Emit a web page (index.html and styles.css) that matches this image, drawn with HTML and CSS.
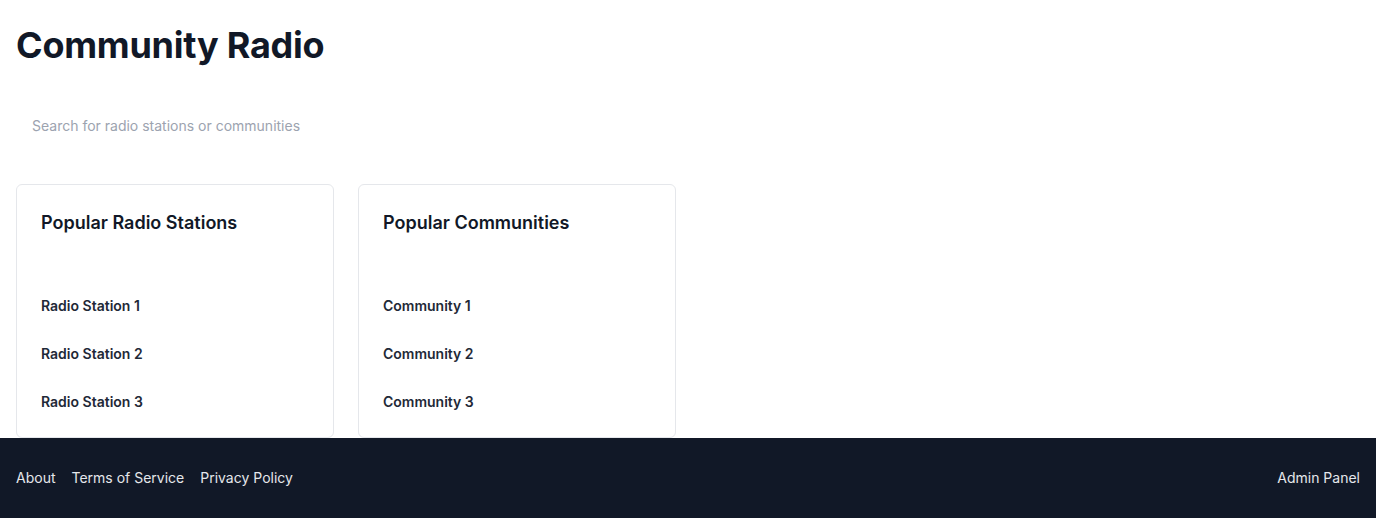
FILE: index.html
```html
<!DOCTYPE html>
<html lang="en">
<head>
<meta charset="utf-8">
<title>Community Radio</title>
<link rel="stylesheet" href="styles.css">
</head>
<body>
<main class="main">
  <h1 class="title">Community Radio</h1>
  <input class="search" type="text" placeholder="Search for radio stations or communities">
  <div class="cards">
    <section class="card">
      <h2 class="card-title">Popular Radio Stations</h2>
      <ul class="list">
        <li>Radio Station 1</li>
        <li>Radio Station 2</li>
        <li>Radio Station 3</li>
      </ul>
    </section>
    <section class="card">
      <h2 class="card-title">Popular Communities</h2>
      <ul class="list">
        <li>Community 1</li>
        <li>Community 2</li>
        <li>Community 3</li>
      </ul>
    </section>
  </div>
</main>
<footer class="footer">
  <nav class="footer-links">
    <a href="#">About</a>
    <a href="#">Terms of Service</a>
    <a href="#">Privacy Policy</a>
  </nav>
  <a href="#">Admin Panel</a>
</footer>
</body>
</html>
```

FILE: styles.css
```css
* { box-sizing: border-box; }
html, body { margin: 0; padding: 0; }
body {
  font-family: Inter, "Noto Sans", sans-serif;
  color: #111827;
  background: #fff;
}
.main {
  padding: 18px 16px 0;
}
.title {
  margin: 0;
  font-size: 36px;
  line-height: 1.5;
  font-weight: 700;
  letter-spacing: -0.25px;
  color: #111827;
}
.search {
  display: block;
  margin-top: 27px;
  width: 400px;
  height: 52px;
  padding: 16px;
  border: none;
  outline: none;
  font-family: inherit;
  font-size: 14px;
  line-height: 20px;
  color: #111827;
  background: transparent;
}
.search::placeholder { color: #9ca3af; }
.cards {
  display: flex;
  gap: 24px;
  margin-top: 33px;
}
.card {
  width: 318px;
  height: 254px;
  border: 1px solid #e5e7eb;
  border-radius: 6px;
  padding: 24px;
  background: #fff;
}
.card-title {
  margin: 0;
  font-size: 18px;
  line-height: 28px;
  font-weight: 600;
  color: #111827;
}
.list {
  list-style: none;
  margin: 59px 0 0;
  padding: 0;
  display: flex;
  flex-direction: column;
  gap: 28px;
}
.list li {
  font-size: 14px;
  line-height: 20px;
  font-weight: 600;
  color: #1f2937;
}
.footer {
  display: flex;
  justify-content: space-between;
  align-items: center;
  height: 80px;
  padding: 0 16px;
  background: #111827;
}
.footer a {
  color: #e5e7eb;
  text-decoration: none;
  font-size: 14px;
  line-height: 20px;
}
.footer-links {
  display: flex;
  gap: 16px;
}
```
